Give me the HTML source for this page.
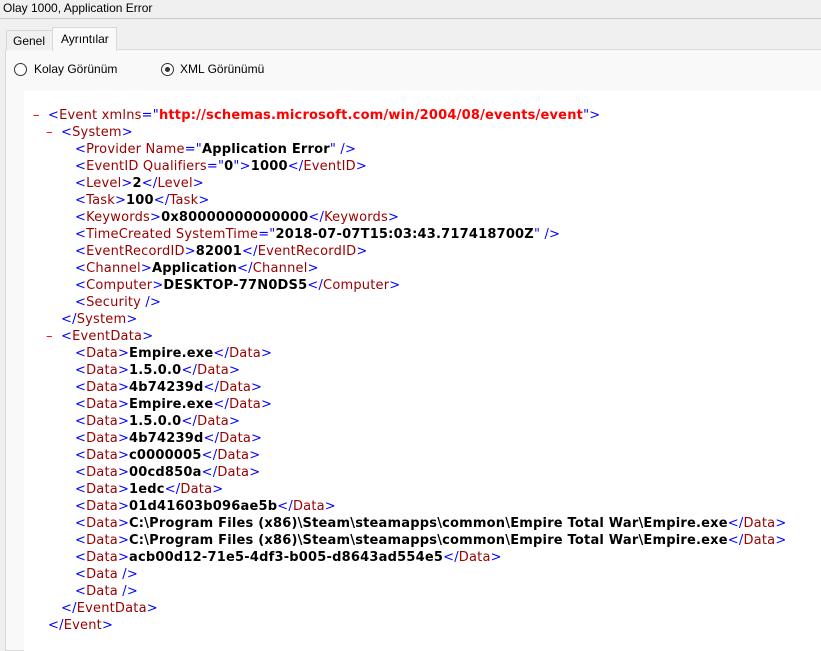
<!DOCTYPE html>
<html><head><meta charset="utf-8"><style>
body{margin:0;width:821px;height:642px;background:#f0f0f0;font-family:"Liberation Sans",sans-serif;overflow:hidden;position:relative}
.title{position:absolute;left:3px;top:1px;font-size:12px;color:#000}
.sep{position:absolute;left:0;top:18px;width:821px;height:1px;background:#c8c8c8}
.panel{position:absolute;left:5px;top:49px;width:820px;height:600px;background:#f9f9f9;border:1px solid #d9d9d9}
.tab{position:absolute;font-size:12px;padding:0}
.t1{left:6px;top:30px;width:45px;height:19px;border:1px solid #d9d9d9;border-bottom:none;background:#f0f0f0}
.t1 span{position:absolute;left:6px;top:3px}
.t2{left:52px;top:27px;width:63px;height:23px;border:1px solid #d9d9d9;border-bottom:none;background:#f9f9f9}
.t2 span{position:absolute;left:8px;top:4px}
.radio{position:absolute;top:63px;width:11px;height:11px;border:1px solid #333;border-radius:50%;background:#fff}
.rl{position:absolute;top:62px;font-size:12px}
.dot{position:absolute;left:3px;top:3px;width:5px;height:5px;border-radius:50%;background:#333}
.xml{position:absolute;left:24px;top:91px;width:800px;height:560px;background:#fff}
.l{position:absolute;margin-top:1px;font-family:"DejaVu Sans",Verdana,sans-serif;font-size:13px;letter-spacing:0.2px;white-space:pre;line-height:17px;color:#000}
.b{color:#0000ff}.m{color:#990000}.v{font-weight:bold}.r{color:#ff0000;font-weight:bold}.d{color:#ff0000}
</style></head><body>
<div class="title">Olay 1000, Application Error</div>
<div class="sep"></div>
<div class="panel"></div>
<div class="tab t1"><span>Genel</span></div>
<div class="tab t2"><span>Ayrıntılar</span></div>
<div class="radio" style="left:14px"></div><div class="rl" style="left:34px">Kolay Görünüm</div>
<div class="radio" style="left:161px"><div class="dot"></div></div><div class="rl" style="left:180px">XML Görünümü</div>
<div class="xml"></div>
<div class="l" style="left:33px;top:106px"><span class="d">–</span></div>
<div class="l" style="left:48px;top:106px"><span class="b">&lt;</span><span class="m">Event xmlns</span><span class="b">="</span><span class="r">http://schemas.microsoft.com/win/2004/08/events/event</span><span class="b">"&gt;</span></div>
<div class="l" style="left:46px;top:123px"><span class="d">–</span></div>
<div class="l" style="left:61px;top:123px"><span class="b">&lt;</span><span class="m">System</span><span class="b">&gt;</span></div>
<div class="l" style="left:75px;top:140px"><span class="b">&lt;</span><span class="m">Provider Name</span><span class="b">="</span><span class="v">Application Error</span><span class="b">" /&gt;</span></div>
<div class="l" style="left:75px;top:157px"><span class="b">&lt;</span><span class="m">EventID Qualifiers</span><span class="b">="</span><span class="v">0</span><span class="b">"&gt;</span><span class="v">1000</span><span class="b">&lt;/</span><span class="m">EventID</span><span class="b">&gt;</span></div>
<div class="l" style="left:75px;top:174px"><span class="b">&lt;</span><span class="m">Level</span><span class="b">&gt;</span><span class="v">2</span><span class="b">&lt;/</span><span class="m">Level</span><span class="b">&gt;</span></div>
<div class="l" style="left:75px;top:191px"><span class="b">&lt;</span><span class="m">Task</span><span class="b">&gt;</span><span class="v">100</span><span class="b">&lt;/</span><span class="m">Task</span><span class="b">&gt;</span></div>
<div class="l" style="left:75px;top:208px"><span class="b">&lt;</span><span class="m">Keywords</span><span class="b">&gt;</span><span class="v">0x80000000000000</span><span class="b">&lt;/</span><span class="m">Keywords</span><span class="b">&gt;</span></div>
<div class="l" style="left:75px;top:225px"><span class="b">&lt;</span><span class="m">TimeCreated SystemTime</span><span class="b">="</span><span class="v">2018-07-07T15:03:43.717418700Z</span><span class="b">" /&gt;</span></div>
<div class="l" style="left:75px;top:242px"><span class="b">&lt;</span><span class="m">EventRecordID</span><span class="b">&gt;</span><span class="v">82001</span><span class="b">&lt;/</span><span class="m">EventRecordID</span><span class="b">&gt;</span></div>
<div class="l" style="left:75px;top:259px"><span class="b">&lt;</span><span class="m">Channel</span><span class="b">&gt;</span><span class="v">Application</span><span class="b">&lt;/</span><span class="m">Channel</span><span class="b">&gt;</span></div>
<div class="l" style="left:75px;top:276px"><span class="b">&lt;</span><span class="m">Computer</span><span class="b">&gt;</span><span class="v">DESKTOP-77N0DS5</span><span class="b">&lt;/</span><span class="m">Computer</span><span class="b">&gt;</span></div>
<div class="l" style="left:75px;top:293px"><span class="b">&lt;</span><span class="m">Security</span><span class="b"> /&gt;</span></div>
<div class="l" style="left:61px;top:310px"><span class="b">&lt;/</span><span class="m">System</span><span class="b">&gt;</span></div>
<div class="l" style="left:46px;top:327px"><span class="d">–</span></div>
<div class="l" style="left:61px;top:327px"><span class="b">&lt;</span><span class="m">EventData</span><span class="b">&gt;</span></div>
<div class="l" style="left:75px;top:344px"><span class="b">&lt;</span><span class="m">Data</span><span class="b">&gt;</span><span class="v">Empire.exe</span><span class="b">&lt;/</span><span class="m">Data</span><span class="b">&gt;</span></div>
<div class="l" style="left:75px;top:361px"><span class="b">&lt;</span><span class="m">Data</span><span class="b">&gt;</span><span class="v">1.5.0.0</span><span class="b">&lt;/</span><span class="m">Data</span><span class="b">&gt;</span></div>
<div class="l" style="left:75px;top:378px"><span class="b">&lt;</span><span class="m">Data</span><span class="b">&gt;</span><span class="v">4b74239d</span><span class="b">&lt;/</span><span class="m">Data</span><span class="b">&gt;</span></div>
<div class="l" style="left:75px;top:395px"><span class="b">&lt;</span><span class="m">Data</span><span class="b">&gt;</span><span class="v">Empire.exe</span><span class="b">&lt;/</span><span class="m">Data</span><span class="b">&gt;</span></div>
<div class="l" style="left:75px;top:412px"><span class="b">&lt;</span><span class="m">Data</span><span class="b">&gt;</span><span class="v">1.5.0.0</span><span class="b">&lt;/</span><span class="m">Data</span><span class="b">&gt;</span></div>
<div class="l" style="left:75px;top:429px"><span class="b">&lt;</span><span class="m">Data</span><span class="b">&gt;</span><span class="v">4b74239d</span><span class="b">&lt;/</span><span class="m">Data</span><span class="b">&gt;</span></div>
<div class="l" style="left:75px;top:446px"><span class="b">&lt;</span><span class="m">Data</span><span class="b">&gt;</span><span class="v">c0000005</span><span class="b">&lt;/</span><span class="m">Data</span><span class="b">&gt;</span></div>
<div class="l" style="left:75px;top:463px"><span class="b">&lt;</span><span class="m">Data</span><span class="b">&gt;</span><span class="v">00cd850a</span><span class="b">&lt;/</span><span class="m">Data</span><span class="b">&gt;</span></div>
<div class="l" style="left:75px;top:480px"><span class="b">&lt;</span><span class="m">Data</span><span class="b">&gt;</span><span class="v">1edc</span><span class="b">&lt;/</span><span class="m">Data</span><span class="b">&gt;</span></div>
<div class="l" style="left:75px;top:497px"><span class="b">&lt;</span><span class="m">Data</span><span class="b">&gt;</span><span class="v">01d41603b096ae5b</span><span class="b">&lt;/</span><span class="m">Data</span><span class="b">&gt;</span></div>
<div class="l" style="left:75px;top:514px"><span class="b">&lt;</span><span class="m">Data</span><span class="b">&gt;</span><span class="v">C:\Program Files (x86)\Steam\steamapps\common\Empire Total War\Empire.exe</span><span class="b">&lt;/</span><span class="m">Data</span><span class="b">&gt;</span></div>
<div class="l" style="left:75px;top:531px"><span class="b">&lt;</span><span class="m">Data</span><span class="b">&gt;</span><span class="v">C:\Program Files (x86)\Steam\steamapps\common\Empire Total War\Empire.exe</span><span class="b">&lt;/</span><span class="m">Data</span><span class="b">&gt;</span></div>
<div class="l" style="left:75px;top:548px"><span class="b">&lt;</span><span class="m">Data</span><span class="b">&gt;</span><span class="v">acb00d12-71e5-4df3-b005-d8643ad554e5</span><span class="b">&lt;/</span><span class="m">Data</span><span class="b">&gt;</span></div>
<div class="l" style="left:75px;top:565px"><span class="b">&lt;</span><span class="m">Data</span><span class="b"> /&gt;</span></div>
<div class="l" style="left:75px;top:582px"><span class="b">&lt;</span><span class="m">Data</span><span class="b"> /&gt;</span></div>
<div class="l" style="left:61px;top:599px"><span class="b">&lt;/</span><span class="m">EventData</span><span class="b">&gt;</span></div>
<div class="l" style="left:48px;top:616px"><span class="b">&lt;/</span><span class="m">Event</span><span class="b">&gt;</span></div>
</body></html>
